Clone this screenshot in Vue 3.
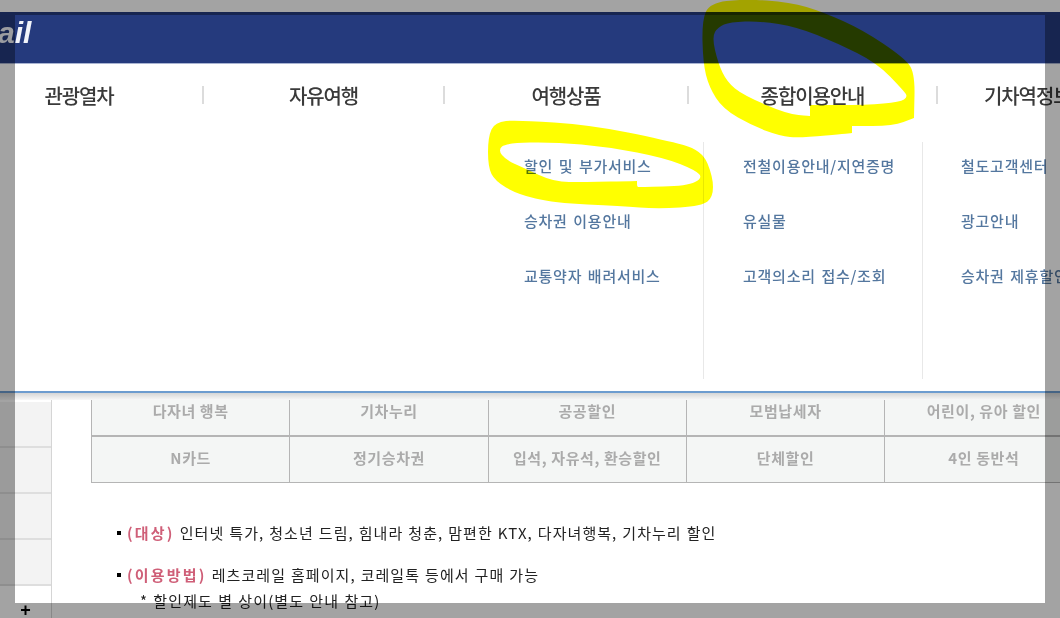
<script setup>
const nav = ['관광열차', '자유여행', '여행상품', '종합이용안내', '기차역정보']
const sub = [
  ['할인 및 부가서비스', '승차권 이용안내', '교통약자 배려서비스'],
  ['전철이용안내/지연증명', '유실물', '고객의소리 접수/조회'],
  ['철도고객센터', '광고안내', '승차권 제휴할인']
]
const rows = [
  ['다자녀 행복', '기차누리', '공공할인', '모범납세자', '어린이, 유아 할인'],
  ['N카드', '정기승차권', '입석, 자유석, 환승할인', '단체할인', '4인 동반석']
]
const smooth = (p) => {
  const mid = (a, b) => [(a[0] + b[0]) / 2, (a[1] + b[1]) / 2]
  const s = mid(p[p.length - 1], p[0])
  let d = `M${s[0]} ${s[1]}`
  p.forEach((c, i) => {
    const m = mid(c, p[(i + 1) % p.length])
    d += `Q${c[0]} ${c[1]} ${m[0]} ${m[1]}`
  })
  return d + 'Z'
}
const scribbleA = smooth([[710,3],[743,-1],[790,2],[823,12],[863,30],[903,57],[915,72],[914,118],[914,118],[893,126],[852,126],[852,126],[852,133],[852,133],[800,138],[780,136],[753,126],[723,109],[709,87],[703,63],[702,20]]) +
  smooth([[712,37],[718,27],[730,22],[760,21],[797,27],[837,43],[877,63],[903,90],[908,97],[900,102],[867,105],[810,105],[810,105],[810,116],[810,116],[787,114],[743,95],[727,82],[718,63]])
const scribbleB = smooth([[488,137],[495,122],[517,120],[591,125],[665,140],[702,150],[713,177],[713,197],[702,206],[658,209],[621,206],[554,203],[517,194],[495,181],[488,167]]) +
  smooth([[498,150],[506,143],[554,142],[609,147],[665,158],[695,170],[703,178],[687,186],[639,187],[637,187],[637,181],[637,181],[584,182],[554,182],[524,168],[506,160]])
</script>

<template>
  <div class="page">
    <div class="gap"></div>
    <header class="bar"><span class="logo">ail</span></header>
    <div class="body">
      <aside class="side">
        <div class="cell" v-for="n in 4" :key="n"></div>
        <div class="plus">+</div>
      </aside>
      <main class="main">
        <div class="table">
          <div class="row" v-for="(r, i) in rows" :key="i">
            <div class="td" v-for="t in r" :key="t"><span>{{ t }}</span></div>
          </div>
        </div>
        <ul class="notes">
          <li><b>(대상)</b> 인터넷 특가, 청소년 드림, 힘내라 청춘, 맘편한 KTX, 다자녀행복, 기차누리 할인</li>
          <li class="second"><b>(이용방법)</b> 레츠코레일 홈페이지, 코레일톡 등에서 구매 가능</li>
        </ul>
        <p class="star">* 할인제도 별 상이(별도 안내 참고)</p>
      </main>
    </div>

    <nav class="menu">
      <div class="tabs">
        <div class="tab" v-for="n in nav" :key="n"><span>{{ n }}</span></div>
      </div>
      <div class="subs">
        <div class="col" v-for="(c, i) in sub" :key="i">
          <a v-for="t in c" :key="t">{{ t }}</a>
        </div>
      </div>
    </nav>

    <div class="window"></div>
    <svg class="ink" width="1060" height="618" viewBox="0 0 1060 618">
      <path :d="scribbleA" fill="#ffff00" fill-rule="evenodd" />
      <path :d="scribbleB" fill="#ffff00" fill-rule="evenodd" />
    </svg>
  </div>
</template>

<style>
html, body { margin: 0; background: #fff; }
</style>

<style scoped>
.page {
  position: relative;
  width: 1060px;
  height: 618px;
  overflow: hidden;
  background: #fff;
  display: flex;
  flex-direction: column;
  font-family: "Noto Sans CJK KR", "Liberation Sans", sans-serif;
}
.gap { height: 12px; flex: none; }
.bar {
  height: 51px;
  flex: none;
  background: #253a7d;
  overflow: hidden;
}
.logo {
  display: block;
  margin: 4px 0 0 -2px;
  font: italic bold 30px/34px "Liberation Sans", sans-serif;
  color: #f2f4fa;
}
.body { flex: 1; display: flex; min-height: 0; }
.side {
  width: 52px;
  flex: none;
  box-sizing: border-box;
  border-right: 1px solid #d5d5d5;
  padding-top: 339px;
  position: relative;
}
.cell {
  height: 44px;
  background: #f3f3f3;
  border-bottom: 2px solid #dedede;
}
.plus {
  position: absolute;
  left: 0;
  right: 0;
  top: 537px;
  text-align: center;
  font: bold 18px/20px "Liberation Sans", sans-serif;
  color: #000;
}
.main { flex: 1; min-width: 0; padding: 327px 0 0 39px; overflow: hidden; }
.table {
  width: 992px;
  border-left: 1px solid #b5b5b5;
  border-bottom: 1px solid #b5b5b5;
}
.row {
  display: grid;
  grid-template-columns: repeat(5, 198.3px);
  height: 45px;
  background: #f4f6f5;
}
.row:first-child { height: 45px; border-bottom: 2px solid #b5b5b5; }
.td {
  display: flex;
  align-items: center;
  justify-content: center;
  box-sizing: border-box;
  border-right: 1px solid #b5b5b5;
  color: #ababab;
  font-size: 15px;
  font-weight: 700;
  letter-spacing: 0.6px;
}
.td span { margin-top: -4px; }
.notes {
  list-style: none;
  margin: 39px 0 0;
  padding: 0 0 0 26px;
  font-size: 15px;
  line-height: 22px;
  letter-spacing: 1.05px;
  word-spacing: 0.6px;
  color: #222;
}
.notes li { position: relative; padding-left: 10px; }
.notes li::before {
  content: "";
  position: absolute;
  left: 0;
  top: 9px;
  width: 4px;
  height: 4px;
  background: #000;
}
.notes li.second { margin-top: 20px; }
.notes b { color: #cf5f78; font-weight: 700; letter-spacing: 2.2px; }
.star {
  margin: 4px 0 0 49px;
  font-size: 15px;
  line-height: 22px;
  letter-spacing: 1.15px;
  word-spacing: 0.6px;
  color: #222;
}
.menu {
  position: absolute;
  left: 0;
  right: 0;
  top: 63px;
  height: 330px;
  box-sizing: border-box;
  background: #fff;
  border-top: 1px solid #a9b4d2;
  border-bottom: 2px solid #6d9ccf;
}
.menu::after {
  content: "";
  position: absolute;
  left: 0;
  right: 0;
  top: 100%;
  height: 7px;
  margin-top: 2px;
  background: linear-gradient(#d6d6d6, #f8f8f8);
}
.tabs {
  display: grid;
  grid-template-columns: 248px 241px 244px 249px 200px;
  margin: 22px 0 0 -44px;
  width: 1200px;
}
.tab {
  height: 18px;
  display: flex;
  align-items: center;
  justify-content: center;
  box-sizing: border-box;
  border-right: 2px solid #dcdcdc;
  font-size: 20px;
  font-weight: 500;
  letter-spacing: -1.1px;
  color: #3a3a3a;
  white-space: nowrap;
}
.tab:last-child { border: 0; justify-content: flex-start; padding-left: 46px; }
.subs {
  display: flex;
  margin: 38px 0 0 485px;
  width: 700px;
}
.col {
  width: 219px;
  height: 237px;
  box-sizing: border-box;
  padding: 13px 0 0 39px;
  border-right: 1px solid #e8e8e8;
  display: flex;
  flex-direction: column;
  gap: 33px;
}
.col:last-child { border: 0; padding-left: 38px; }
.col a {
  height: 22px;
  line-height: 22px;
  font-size: 15px;
  font-weight: 500;
  letter-spacing: 0.75px;
  word-spacing: 1.5px;
  color: #54779f;
  white-space: nowrap;
}
.window {
  position: absolute;
  left: 15px;
  top: 15px;
  width: 1030px;
  height: 588px;
  box-shadow: 0 0 0 1000px rgba(0, 0, 0, 0.36);
  pointer-events: none;
}
.ink {
  position: absolute;
  left: 0;
  top: 0;
  mix-blend-mode: multiply;
  pointer-events: none;
}
</style>
